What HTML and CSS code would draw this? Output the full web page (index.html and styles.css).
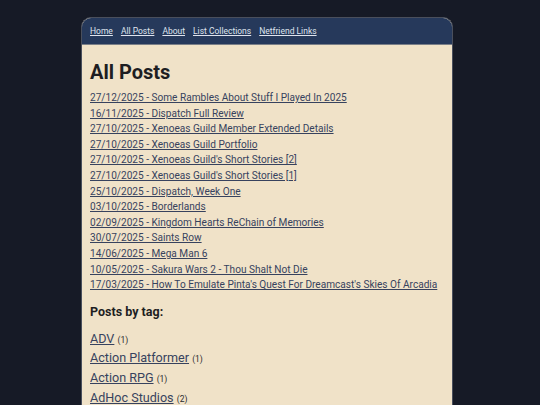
FILE: index.html
```html
<!DOCTYPE html>
<html>
<head>
<meta charset="utf-8">
<link rel="stylesheet" href="styles.css">
</head>
<body>
<div class="page">
  <nav class="nav">
    <a href="#">Home</a>
    <a href="#">All Posts</a>
    <a href="#">About</a>
    <a href="#">List Collections</a>
    <a href="#">Netfriend Links</a>
  </nav>
  <main class="content">
    <h1 class="title">All Posts</h1>
    <ul class="posts">
      <li><a href="#">27/12/2025 - Some Rambles About Stuff I Played In 2025</a></li>
      <li><a href="#">16/11/2025 - Dispatch Full Review</a></li>
      <li><a href="#">27/10/2025 - Xenoeas Guild Member Extended Details</a></li>
      <li><a href="#">27/10/2025 - Xenoeas Guild Portfolio</a></li>
      <li><a href="#">27/10/2025 - Xenoeas Guild's Short Stories [2]</a></li>
      <li><a href="#">27/10/2025 - Xenoeas Guild's Short Stories [1]</a></li>
      <li><a href="#">25/10/2025 - Dispatch, Week One</a></li>
      <li><a href="#">03/10/2025 - Borderlands</a></li>
      <li><a href="#">02/09/2025 - Kingdom Hearts ReChain of Memories</a></li>
      <li><a href="#">30/07/2025 - Saints Row</a></li>
      <li><a href="#">14/06/2025 - Mega Man 6</a></li>
      <li><a href="#">10/05/2025 - Sakura Wars 2 - Thou Shalt Not Die</a></li>
      <li><a href="#">17/03/2025 - How To Emulate Pinta's Quest For Dreamcast's Skies Of Arcadia</a></li>
    </ul>
    <h2 class="subtitle">Posts by tag:</h2>
    <ul class="tags">
      <li><a href="#">ADV</a> <span class="count">(1)</span></li>
      <li><a href="#">Action Platformer</a> <span class="count">(1)</span></li>
      <li><a href="#">Action RPG</a> <span class="count">(1)</span></li>
      <li><a href="#">AdHoc Studios</a> <span class="count">(2)</span></li>
    </ul>
  </main>
</div>
</body>
</html>
```
FILE: styles.css
```css
html, body {
  margin: 0;
  padding: 0;
  background: #161a26;
  height: 405px;
  overflow: hidden;
}
body {
  font-family: Roboto, "Liberation Sans", sans-serif;
  padding-top: 17px;
  padding-right: 6px;
}
.page {
  width: 370px;
  margin: 0 auto;
  border: 1px solid #4a4f5c;
  border-radius: 10px;
  overflow: hidden;
  background: #f0e2c8;
  min-height: 500px;
}
.nav {
  background: #26395b;
  height: 26px;
  border-bottom: 1px solid #7a7f88;
  display: flex;
  align-items: center;
  gap: 8px;
  padding: 0 8px;
  font-size: 8.5px;
}
.nav a {
  color: #dfe4ee;
}
.content {
  padding: 0 8px;
}
.title {
  font-size: 20px;
  font-weight: 700;
  color: #1e1e22;
  margin: 15px 0 6px;
  line-height: 24px;
}
.posts {
  list-style: none;
  margin: 0;
  padding: 0;
  font-size: 10.1px;
  line-height: 15.6px;
}
.posts a, .tags a {
  color: #37425e;
}
.subtitle {
  font-size: 12.5px;
  font-weight: 700;
  color: #1e1e22;
  margin: 10px 0 8px;
  line-height: 18px;
}
.tags {
  list-style: none;
  margin: 0;
  padding: 0;
  font-size: 12.6px;
  line-height: 19.7px;
}
.tags li {
  height: 19.7px;
}
.count {
  font-size: 8.5px;
  line-height: 1;
  color: #2a2a2e;
}
```
